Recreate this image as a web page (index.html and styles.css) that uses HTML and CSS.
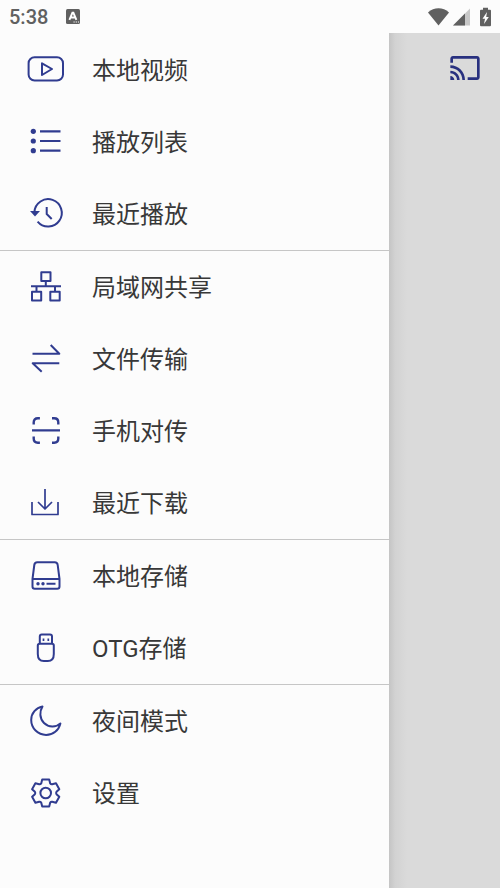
FILE: index.html
```html
<!DOCTYPE html>
<html lang="zh-CN">
<head>
<meta charset="utf-8">
<meta name="viewport" content="width=device-width, initial-scale=1">
<title>本地视频</title>
<link rel="stylesheet" href="styles.css">
</head>
<body>
<header class="status">
  <time class="clock">5:38</time>
  <svg class="notice" viewBox="0 0 14 15" aria-hidden="true">
    <rect width="14" height="15" rx="1.5" fill="#606060"/>
    <path d="M3.4 10.8 6.4 3.800h1l3 7M4.800 8.500h4.400" fill="none" stroke="#fff" stroke-width="1.900"/>
    <path d="M7.500 13h1.200M9.700 13h1.200M11.900 13h1.200" stroke="#fff" stroke-width="1.200"/>
  </svg>
  <div class="signals">
    <svg width="21" height="18" viewBox="0 0 21 18" aria-hidden="true"><path d="M0 4.400C6-1.200 15-1.200 21 4.400L10.500 17.500z" fill="#606060"/></svg>
    <svg class="cell" width="17" height="18" viewBox="0 0 17 18" aria-hidden="true"><path d="M0 17.500 17 .5v17z" fill="#c8c8c8"/><path d="M0 17.500 12 5.500v12z" fill="#606060"/></svg>
    <svg class="battery" width="11" height="20" viewBox="0 0 11 20" aria-hidden="true"><path d="M3 .7h5v2h2q1 0 1 1V18q0 1.300-1 1.300H1Q0 19.300 0 18V3.700q0-1 1-1h2z" fill="#606060"/><path d="M7 5 2.500 11.700h2.500L4 17l4.800-7H6.200z" fill="#fff"/></svg>
  </div>
</header>
<div class="screen">
  <nav class="drawer">
    <ul class="group">
      <li><a class="item" href="#videos"><svg class="icon" viewBox="0 0 40 40"><rect x="2.600" y="7.300" width="34.400" height="23.200" rx="6"/><path d="M16 13.300 26 19 16 25z"/></svg><span class="label">本地视频</span></a></li>
      <li><a class="item" href="#playlist"><svg class="icon" viewBox="0 0 40 40"><path d="M14 9.300h20.500M14 19h20.500M14 28.700h20.500" stroke-width="2.200"/><g class="solid"><circle cx="7.300" cy="9.300" r="2.600"/><circle cx="7.300" cy="19" r="2.600"/><circle cx="7.300" cy="28.700" r="2.600"/></g></svg><span class="label">播放列表</span></a></li>
      <li><a class="item" href="#recent"><svg class="icon" viewBox="0 0 40 40"><path d="M8.400 18A13.700 13.700 0 1 1 11.600 27.700M20.700 13v7l5 5"/><path class="solid" d="M4 17h10l-5 5.500z"/></svg><span class="label">最近播放</span></a></li>
    </ul>
    <ul class="group">
      <li><a class="item" href="#lan"><svg class="icon" viewBox="0 0 40 40"><path d="M15.300 5.300h9.200v8.700h-9.200zM6 24.800h9.200v8.700H6zM24.300 24.800h9.400v8.700h-9.400zM19.800 14v5M5 19.200h30M10.500 19.200v5.600M29 19.200v5.600"/></svg><span class="label">局域网共享</span></a></li>
      <li><a class="item" href="#files"><svg class="icon" viewBox="0 0 40 40"><path d="M6.500 14.700h26.800L24.700 6M33.300 24.300H6.700l9 8.400"/></svg><span class="label">文件传输</span></a></li>
      <li><a class="item" href="#phone"><svg class="icon" viewBox="0 0 40 40"><path d="M7.700 13.500v-2q0-4.200 4.200-4.200h2M26 7.300h2.100q4.200 0 4.200 4.200v2M7.700 25.500v2q0 4.200 4.200 4.200h2M26 31.700h2.100q4.200 0 4.200-4.200v-2M6 19.400h28" stroke-width="2.400"/></svg><span class="label">手机对传</span></a></li>
      <li><a class="item" href="#downloads"><svg class="icon" viewBox="0 0 40 40"><path d="M6 19v12.500h26V19M19 6v20M12 19l7 7 7-7" stroke-width="1.700"/></svg><span class="label">最近下载</span></a></li>
    </ul>
    <ul class="group">
      <li><a class="item" href="#storage"><svg class="icon" viewBox="0 0 40 40"><path d="M6.500 23 8.300 9q.3-2.700 3-2.700h17.400q2.700 0 3 2.700l1.800 14v7.500q0 2.300-2.300 2.300H8.800q-2.300 0-2.300-2.300zh27M20.500 27.700h9"/><g class="solid"><circle cx="12" cy="27.700" r="1.700"/><circle cx="17" cy="27.700" r="1.700"/></g></svg><span class="label">本地存储</span></a></li>
      <li><a class="item" href="#otg"><svg class="icon" viewBox="0 0 40 40"><path d="M13.800 15.700V8.500q0-2 2-2h8.200q2 0 2 2v7.200M13.800 15.700h12.200q1.800 0 1.800 1.800v8.500q0 7-6 7h-4q-6 0-6-7v-8.500q0-1.800 2-1.800z"/><path d="M17.500 10.500v2.500M22.300 10.500v2.500" stroke-width="1.700"/></svg><span class="label">OTG存储</span></a></li>
    </ul>
    <ul class="group">
      <li><a class="item" href="#night"><svg class="icon" viewBox="0 0 40 40"><path d="M16.500 5.500C10 6.800 5.200 12.300 5.200 19c0 8.300 6.700 14.900 14.900 14.900 7 0 12.700-4.700 14.300-11.500C30 26.700 22.500 26.500 18 22 13.500 17.500 13.300 10.500 16.500 5.500z"/></svg><span class="label">夜间模式</span></a></li>
      <li><a class="item" href="#settings"><svg class="icon" viewBox="0 0 40 40"><g transform="translate(19.700 20)"><path d="M-4.500-9.600-3.500-13.500H3.500L4.500-9.600Q5.200-8.600 6.500-8.800L10.300-9.800 13.600-3.800 10.800-1.200Q10 0 10.800 1.200L13.600 3.800 10.300 9.800 6.500 8.800Q5.200 8.600 4.500 9.600L3.500 13.500H-3.500L-4.500 9.600Q-5.200 8.600-6.500 8.800L-10.300 9.800-13.600 3.800-10.800 1.200Q-10 0-10.800-1.200L-13.600-3.800-10.300-9.800-6.500-8.800Q-5.200-8.600-4.500-9.600z"/><circle r="5.300"/></g></svg><span class="label">设置</span></a></li>
    </ul>
  </nav>
  <main class="content">
    <button class="cast" type="button" aria-label="投屏">
      <svg width="32" height="32" viewBox="0 0 24 24" aria-hidden="true"><path d="M21 3H3c-1.100 0-2 .9-2 2v3h2V5h18v14h-7v2h7c1.100 0 2-.9 2-2V5c0-1.100-.9-2-2-2zM1 18v3h3c0-1.660-1.340-3-3-3zm0-4v2c2.760 0 5 2.240 5 5h2c0-3.870-3.130-7-7-7zm0-4v2c4.970 0 9 4.030 9 9h2c0-6.080-4.930-11-11-11z" fill="currentColor"/></svg>
    </button>
  </main>
</div>
</body>
</html>
```
FILE: styles.css
```css
* {
  box-sizing: border-box;
}

body {
  margin: 0;
  min-height: 100vh;
  display: flex;
  flex-direction: column;
  background: #fcfcfc;
  color: #383838;
  font-family: Roboto, "Noto Sans CJK SC", sans-serif;
}

.status {
  height: 33px;
  padding: 0 9px;
  display: flex;
  align-items: center;
  color: #606060;
}

.clock {
  font-size: 20px;
  font-weight: 500;
  line-height: 32px;
}

.notice {
  width: 14px;
  height: 15px;
  margin-left: 18px;
}

.signals {
  margin-left: auto;
  display: flex;
  align-items: center;
}

.cell {
  margin-left: 4px;
}

.battery {
  margin-left: 10px;
}

.screen {
  flex: 1;
  display: flex;
}

.drawer {
  width: 77.8%;
  padding-top: 1px;
}

.group {
  margin: 0;
  padding: 0;
  list-style: none;
}

.group + .group {
  border-top: 1px solid #c6c6c6;
}

.item {
  height: 72px;
  padding-left: 26px;
  display: flex;
  align-items: center;
  gap: 26px;
  color: inherit;
  font-size: 24px;
  line-height: 36px;
  text-decoration: none;
}

.label {
  padding-top: 2px;
}

.icon {
  width: 40px;
  height: 40px;
  fill: none;
  stroke: #303c90;
  stroke-width: 2;
  stroke-linejoin: round;
}

.icon .solid {
  fill: #303c90;
  stroke: none;
}

.content {
  flex: 1;
  padding: 19px;
  display: flex;
  justify-content: flex-end;
  align-items: flex-start;
  background: linear-gradient(to right, #c4c4c4, #d2d2d2 6px, #dadada 18px);
}

.cast {
  padding: 0;
  border: 0;
  background: none;
  color: #28307f;
}

.cast svg {
  display: block;
}
```
